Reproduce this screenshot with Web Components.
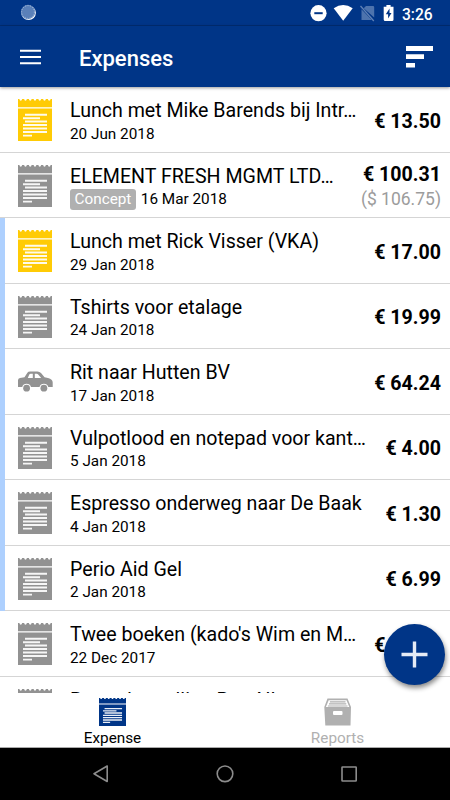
<!DOCTYPE html>
<html lang="nl">
<head>
<meta charset="utf-8">
<title>Expenses</title>
<style>
html,body{margin:0;padding:0}
body{width:450px;height:800px;overflow:hidden;background:#fff;font-family:Roboto,"Liberation Sans",sans-serif;color:#000}
</style>
</head>
<body>
<expense-app></expense-app>
<script>
const define = (name, html, setup) => customElements.define(name, class extends HTMLElement {
  constructor() {
    super();
    const t = document.createElement('template');
    t.innerHTML = html;
    this.attachShadow({ mode: 'open' }).append(t.content.cloneNode(true));
  }
  connectedCallback() { if (setup) setup(this, this.shadowRoot); }
});

define('receipt-icon', `<style>:host{display:block;width:34px;height:42px}svg{display:block;width:100%;height:100%}</style>
<svg viewBox="0 0 34 42" preserveAspectRatio="none"><path fill="currentColor" d="M0 0H1.5C1.5 2.2 4 2.2 4 0H6.25C6.25 2.2 8.75 2.2 8.75 0H11C11 2.2 13.5 2.2 13.5 0H15.75C15.75 2.2 18.25 2.2 18.25 0H20.5C20.5 2.2 23 2.2 23 0H25.25C25.25 2.2 27.75 2.2 27.75 0H30C30 2.2 32.5 2.2 32.5 0H34V8.2H0zM0 9.6H34V42H0z"/>
<path stroke="#fff" stroke-opacity=".92" stroke-width="1.9" d="M7 15.8H29M5 19.2H22M7 22.5H29M5 26H29M5 29.5H29M5 33H29M5 36.6H14"/></svg>`);

define('car-icon', `<style>:host{display:block;width:36px;height:21px}svg{display:block}</style>
<svg width="36" height="21" viewBox="0 0 36 21"><path fill="currentColor" fill-rule="evenodd" d="M1 16V9.2Q1 7.5 3 7L7.5 6.2L10.4 1.8Q11.2 .4 13 .4H20.5Q22.5 .4 24 2L27.5 6.2L31 7Q35.7 8 35.7 11.5V16H31.3A4.6 4.6 0 0 0 22.5 16H14A4.6 4.6 0 0 0 5.2 16zM10.8 7H15.8V2.8H13.6Q12.8 2.8 12.3 3.6zM17.8 7H24.2L21.2 3.6Q20.6 2.8 19.7 2.8H17.8z"/><circle cx="9.6" cy="17.2" r="3.4" fill="currentColor"/><circle cx="26.9" cy="17.2" r="3.4" fill="currentColor"/></svg>`);

define('status-bar', `<style>:host{display:flex;align-items:center;height:26px;padding:0 17px 0 20px;background:#003587;color:#fff;box-sizing:border-box;box-shadow:inset 0 -1px #002c72}
.r{flex:none;display:block;margin-left:auto}b{font-weight:500;font-size:15.6px;line-height:26px;width:31px;margin-left:7px;white-space:nowrap;padding-top:3px}</style>
<svg width="18" height="18" viewBox="0 0 18 18"><circle cx="8.6" cy="8.8" r="7.3" fill="#fff"/><circle cx="8" cy="8" r="7.2" fill="#5a80b9"/><circle cx="8" cy="8" r="6.4" fill="none" stroke="#a9bfdd" stroke-width="1" stroke-dasharray="1.2 1.2"/></svg>
<svg class="r" width="86" height="26" viewBox="0 0 86 26"><circle cx="9.5" cy="13.2" r="8.1" fill="#fff"/><path d="M5.3 13.2H13.7" stroke="#003587" stroke-width="2"/><path fill="#fff" d="M24.7 8.3Q34.2 1.5 43.7 8.3L34.2 20.7z"/><path fill="#4d73ad" d="M57 6H64Q65.2 6 65.2 7.2V17.5L54.7 8.2zM52.5 9.2L62.8 20H52.5z"/><path d="M51.5 6L64.8 21" stroke="#5f81b5" stroke-width="1.3"/><path fill="#fff" d="M77.4 5H81.6V6.7H84.5V19.5Q84.5 21 83 21H76.3Q74.7 21 74.7 19.5V6.7H77.4z"/><path fill="#003587" d="M80.5 8.6L76.8 14.3H79.1V18.6L82.5 12.9H80.5z"/></svg><b>3:26</b>`);

define('app-header', `<style>:host{display:flex;align-items:center;height:61px;padding:0 17px 0 20px;box-sizing:border-box;background:#003587;color:#fff;box-shadow:0 1px 3px #0006;position:relative;z-index:2}
h1{margin:4px auto 0 38px;font-size:22px;font-weight:500;line-height:30px}svg{display:block}.f{margin-top:1px}</style>
<svg width="21" height="16" viewBox="0 0 21 16"><path d="M0 1.8H21M0 8H21M0 14.2H21" stroke="#fff" stroke-width="2.1"/></svg>
<h1><slot></slot></h1>
<svg class="f" width="27" height="22" viewBox="0 0 27 22"><path fill="#fff" d="M0 0H27V5H0zM0 8.3H18V13H0zM0 17H9V21.5H0z"/></svg>`);

define('expense-row', `<style>:host{display:flex;height:65.5px;box-sizing:border-box;border-bottom:1px solid #d5d5d5;padding-right:9px;color:#000;flex:none}
.bar{width:5px;flex:none;margin-bottom:-1px}:host([marked]) .bar{background:#aed0fe}
.icon{width:65px;flex:none;padding:12px 0 0 13px;box-sizing:border-box;color:#929292}:host([fresh]) .icon{color:#ffcb05}
car-icon{margin:10px 0 0 -1px}
.text{flex:1;min-width:0;padding-top:11px}
.title{font-size:19.6px;line-height:25px;white-space:nowrap}
.meta{display:flex;align-items:center;height:21px;font-size:15.3px;line-height:21px;white-space:nowrap;margin-top:.5px}
.badge{background:#b0b0b0;color:#fff;border-radius:3px;padding:0 4.5px;margin-right:5px}
.sum{display:flex;flex-direction:column;justify-content:center;text-align:right;white-space:nowrap;font-size:19.6px;line-height:25px;font-weight:700;padding-top:4px}
.sum small{font-size:17.5px;font-weight:400;color:#9c9c9c;line-height:25px}</style>
<div class="bar"></div><div class="icon"></div><div class="text"><div class="title"><slot></slot></div><div class="meta"></div></div><div class="sum"></div>`, (el, root) => {
  const $ = s => root.querySelector(s), a = n => el.getAttribute(n);
  $('.icon').append(document.createElement((a('icon') || 'receipt') + '-icon'));
  if (a('badge')) { const b = document.createElement('span'); b.className = 'badge'; b.textContent = a('badge'); $('.meta').append(b); }
  const d = document.createElement('span'); d.textContent = a('date'); $('.meta').append(d);
  const s = document.createElement('span'); s.textContent = a('amount'); $('.sum').append(s);
  if (a('foreign')) { const f = document.createElement('small'); f.textContent = a('foreign'); $('.sum').append(f); }
});

define('tab-item', `<style>:host{flex:1;display:flex;flex-direction:column;align-items:center;padding-top:5px;color:#000;font-size:15.3px;line-height:20px}:host([off]){color:#b0b0b0}.l{margin-top:2px}::slotted(*){display:block}</style>
<slot name="icon"></slot><span class="l"><slot></slot></span>`);

define('tab-bar', `<style>:host{display:flex;height:55px;box-sizing:border-box;background:#fff;border-bottom:1px solid #aaa;flex:none;position:relative;z-index:1}
receipt-icon{width:27px;height:28px;color:#003587}svg{display:block;flex:none}</style>
<tab-item><receipt-icon slot="icon"></receipt-icon>Expense</tab-item>
<tab-item off><svg slot="icon" width="28" height="28" viewBox="0.5 0 28 28"><path fill="#b0b0b0" fill-rule="evenodd" d="M4 .5H24L27.5 9L27 27.5H1.8L.8 9zM5.2 2.2L2.4 9H25.8L23 2.2z"/><path d="M6.4 3.9H22M5.5 5.9H22.8M4.4 8H24" stroke="#b0b0b0" stroke-width="1.2"/><rect x="9.5" y="13" width="9.5" height="4" rx="1" fill="#fff"/></svg>Reports</tab-item>`);

define('nav-bar', `<style>:host{display:flex;justify-content:center;align-items:center;height:52px;background:#000;flex:none}svg{display:block}</style>
<svg width="450" height="52" viewBox="0 0 450 52" fill="none" stroke="#8c8c8c" stroke-width="1.6" stroke-linejoin="round"><path d="M107.2 18V33.5L94 25.7z"/><circle cx="225" cy="25.8" r="7.8"/><rect x="342" y="19" width="14.2" height="14" rx=".5"/></svg>`);

define('add-button', `<style>:host{position:absolute;left:383.5px;top:624px;width:61px;height:61px;border-radius:50%;background:#003587;box-shadow:1px 3px 5px #0007;z-index:3;display:grid;place-items:center}svg{display:block}</style>
<svg width="27" height="27" viewBox="0 0 27 27"><path d="M13.5 .5V26.5M.5 13.5H26.5" stroke="#e5ebf5" stroke-width="3.4"/></svg>`);

define('expense-app', `<style>:host{display:flex;flex-direction:column;width:450px;height:800px;position:relative;overflow:hidden;background:#fff}main{flex:1;min-height:0;overflow:hidden;display:flex;flex-direction:column}</style>
<status-bar></status-bar><app-header>Expenses</app-header>
<main>
<expense-row fresh date="20 Jun 2018" amount="€ 13.50">Lunch met Mike Barends bij Intr…</expense-row>
<expense-row badge="Concept" date="16 Mar 2018" amount="€ 100.31" foreign="($ 106.75)">ELEMENT FRESH MGMT LTD…</expense-row>
<expense-row marked fresh date="29 Jan 2018" amount="€ 17.00">Lunch met Rick Visser (VKA)</expense-row>
<expense-row marked date="24 Jan 2018" amount="€ 19.99">Tshirts voor etalage</expense-row>
<expense-row marked icon="car" date="17 Jan 2018" amount="€ 64.24">Rit naar Hutten BV</expense-row>
<expense-row marked date="5 Jan 2018" amount="€ 4.00">Vulpotlood en notepad voor kant…</expense-row>
<expense-row marked date="4 Jan 2018" amount="€ 1.30">Espresso onderweg naar De Baak</expense-row>
<expense-row marked date="2 Jan 2018" amount="€ 6.99">Perio Aid Gel</expense-row>
<expense-row date="22 Dec 2017" amount="€ 32.50">Twee boeken (kado's Wim en M…</expense-row>
<expense-row date="" amount="">Retourbestelling PostNL</expense-row>
</main>
<tab-bar></tab-bar><nav-bar></nav-bar><add-button></add-button>`);
</script>
</body>
</html>
